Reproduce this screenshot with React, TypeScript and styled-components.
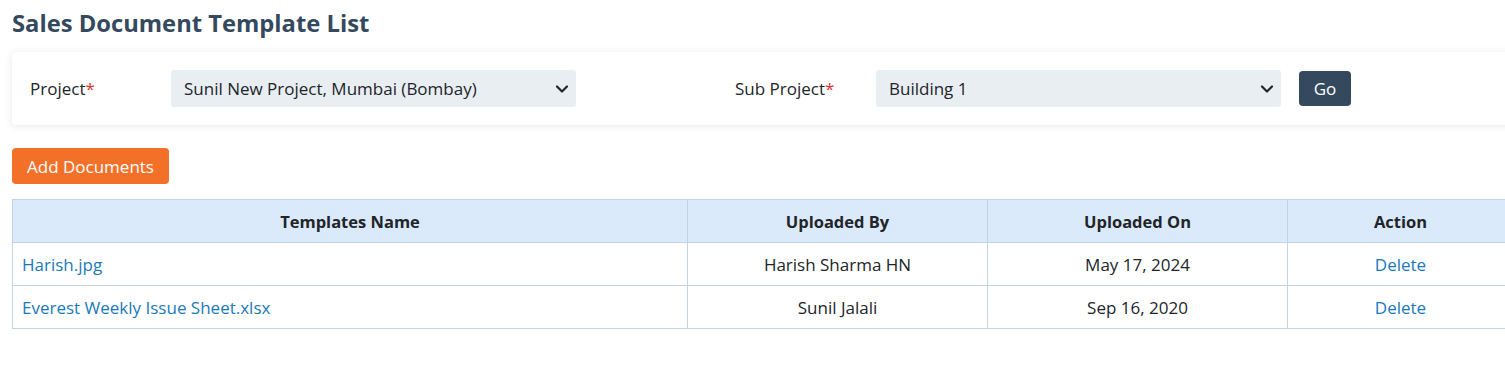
import styled, { createGlobalStyle } from 'styled-components';

const GlobalStyle = createGlobalStyle`
	body {
		margin: 0;
		background: #ffffff;
		font-family: 'Segoe UI', 'Open Sans', sans-serif;
		color: #212529;
	}
`;

const Page = styled.div`
	width: 1502px;
	padding: 0 12px;
`;

const Title = styled.h1`
	margin: 0;
	padding: 7px 0 13px;
	font-size: 23.75px;
	font-weight: 700;
	line-height: 32px;
	color: #34495e;
`;

const FilterCard = styled.div`
	display: grid;
	grid-template-columns: 141px 405px 159px 141px 405px 52px;
	align-items: center;
	height: 73px;
	padding: 0 18px;
	background: #ffffff;
	border-radius: 4px;
	box-shadow: 0 1px 10px rgba(0, 0, 0, 0.09);
`;

const Label = styled.label`
	font-size: 17px;
	color: #212529;
`;

const Required = styled.span`
	color: #e03131;
`;

const Select = styled.div`
	position: relative;
	display: flex;
	align-items: center;
	height: 37px;
	padding: 0 13px;
	background: #e9eef3;
	border-radius: 3px;
	font-size: 17px;
	color: #212529;
`;

const Chevron = styled.svg`
	position: absolute;
	right: 7px;
	top: 14px;
`;

const Spacer = styled.div``;

const Button = styled.button<{ $variant: 'dark' | 'orange' }>`
	height: 36px;
	padding: 0 15px;
	border: none;
	border-radius: 4px;
	font-family: inherit;
	font-size: 17px;
	color: #ffffff;
	background: ${(p) => (p.$variant === 'dark' ? '#34495e' : '#f37029')};
	cursor: pointer;
`;

const GoButton = styled(Button)`
	margin-left: 18px;
	width: 52px;
	padding: 0;
	height: 35px;
`;

const Toolbar = styled.div`
	padding: 23px 0 15px;
`;

const Table = styled.table`
	width: 100%;
	table-layout: fixed;
	border-collapse: collapse;
	font-size: 17px;
`;

const Th = styled.th<{ $width?: number }>`
	box-sizing: border-box;
	width: ${(p) => (p.$width ? `${p.$width}px` : 'auto')};
	height: 43px;
	padding: 0 9px;
	background: #dbeafa;
	border: 1px solid #c3d3e3;
	font-size: 16.5px;
	font-weight: 700;
	color: #212529;
	text-align: center;
`;

const Td = styled.td<{ $align?: 'left' | 'center' }>`
	height: 42px;
	padding: 0 9px;
	border: 1px solid #c3d3e3;
	text-align: ${(p) => p.$align || 'center'};
	color: #212529;
`;

const Link = styled.a`
	color: #1a7ab8;
	text-decoration: none;
	cursor: pointer;
`;

const rows = [
	{ name: 'Harish.jpg', by: 'Harish Sharma HN', on: 'May 17, 2024' },
	{ name: 'Everest Weekly Issue Sheet.xlsx', by: 'Sunil Jalali', on: 'Sep 16, 2020' },
];

const ChevronIcon = () => (
	<Chevron width="14" height="10" viewBox="0 0 14 10" fill="none">
		<path d="M2 2.5L7 7.5L12 2.5" stroke="#212529" strokeWidth="2.2" strokeLinecap="round" strokeLinejoin="round" />
	</Chevron>
);

const App = () => {
	return (
		<>
			<GlobalStyle />
			<Page>
				<Title>Sales Document Template List</Title>
				<FilterCard>
					<Label>
						Project<Required>*</Required>
					</Label>
					<Select>
						Sunil New Project, Mumbai (Bombay)
						<ChevronIcon />
					</Select>
					<Spacer />
					<Label>
						Sub Project<Required>*</Required>
					</Label>
					<Select>
						Building 1
						<ChevronIcon />
					</Select>
					<GoButton $variant="dark">Go</GoButton>
				</FilterCard>
				<Toolbar>
					<Button $variant="orange">Add Documents</Button>
				</Toolbar>
				<Table>
					<thead>
						<tr>
							<Th $width={675}>Templates Name</Th>
							<Th $width={300}>Uploaded By</Th>
							<Th $width={300}>Uploaded On</Th>
							<Th>Action</Th>
						</tr>
					</thead>
					<tbody>
						{rows.map((row) => (
							<tr key={row.name}>
								<Td $align="left">
									<Link>{row.name}</Link>
								</Td>
								<Td>{row.by}</Td>
								<Td>{row.on}</Td>
								<Td>
									<Link>Delete</Link>
								</Td>
							</tr>
						))}
					</tbody>
				</Table>
			</Page>
		</>
	);
};

export default App;
